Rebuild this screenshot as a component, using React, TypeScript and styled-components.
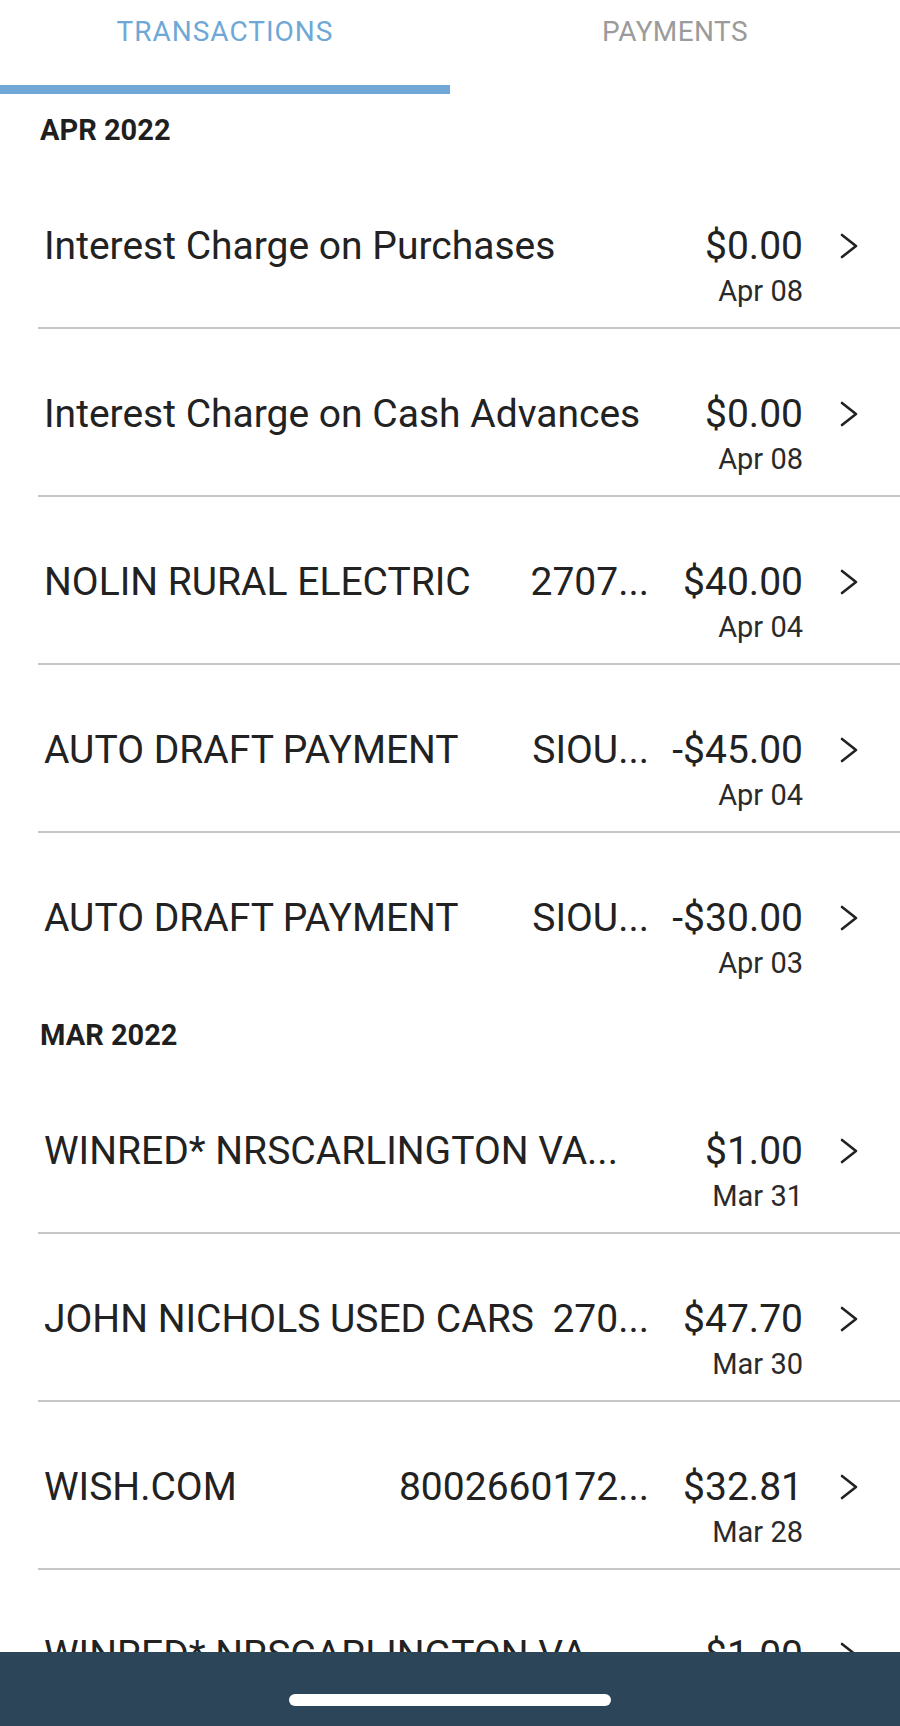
import React from "react";
import styled, { createGlobalStyle } from "styled-components";

const GlobalStyle = createGlobalStyle`
  html, body {
    margin: 0;
    padding: 0;
    background: #ffffff;
  }
  body {
    font-family: Roboto, "Noto Sans", "Liberation Sans", sans-serif;
    color: #222222;
    -webkit-font-smoothing: antialiased;
  }
  * { box-sizing: border-box; }
`;

const Screen = styled.div`
  position: relative;
  width: 900px;
  height: 1726px;
  overflow: hidden;
  background: #ffffff;
`;

const TabBar = styled.nav`
  display: flex;
`;

const Tab = styled.div<{ $active?: boolean }>`
  flex: 1;
  height: 94px;
  padding-top: 15px;
  text-align: center;
  font-size: 28px;
  line-height: 34px;
  letter-spacing: ${(p) => (p.$active ? "1px" : "0.4px")};
  color: ${(p) => (p.$active ? "#6fa8d6" : "#9b9b9b")};
  border-bottom: 9px solid ${(p) => (p.$active ? "#6fa8d6" : "transparent")};
`;

const SectionHeader = styled.h2`
  margin: 0;
  height: 67px;
  padding: 19px 0 0 40px;
  font-size: 29px;
  line-height: 34px;
  font-weight: 700;
  color: #1f1f1f;
`;

const Row = styled.div<{ $divider: boolean }>`
  margin-left: 38px;
  padding: 62px 42px 0 6px;
  height: ${(p) => (p.$divider ? 168 : 166)}px;
  border-bottom: ${(p) => (p.$divider ? "2px solid #c6c6c6" : "none")};
`;

const TopLine = styled.div`
  display: flex;
  align-items: center;
  height: 46px;
  font-size: 39px;
  line-height: 46px;
  color: #222222;
`;

const Name = styled.span`
  flex: 0 0 auto;
  max-width: 600px;
  white-space: nowrap;
  overflow: hidden;
  text-overflow: ellipsis;
`;

const Ref = styled.span`
  flex: 1 1 auto;
  min-width: 0;
  margin: 0 4px 0 16px;
  text-align: right;
  white-space: nowrap;
  overflow: hidden;
`;

const Amount = styled.span`
  flex: none;
  min-width: 150px;
  margin-left: auto;
  text-align: right;
  white-space: nowrap;
`;

const Chevron = styled.svg`
  flex: none;
  width: 18px;
  height: 26px;
  margin-left: 37px;
`;

const DateLine = styled.div`
  margin-top: 5px;
  padding-right: 55px;
  text-align: right;
  font-size: 29px;
  line-height: 34px;
  color: #2a2a2a;
`;

const BottomBar = styled.div`
  position: absolute;
  left: 0;
  right: 0;
  bottom: 0;
  height: 74px;
  background: #2d4559;
  display: flex;
  justify-content: center;
  padding-top: 42px;
`;

const HomeIndicator = styled.div`
  width: 322px;
  height: 12px;
  border-radius: 6px;
  background: #ffffff;
`;

type Txn = { name: string; ref?: string; amount: string; date: string };

const sections: { title: string; items: Txn[] }[] = [
  {
    title: "APR 2022",
    items: [
      { name: "Interest Charge on Purchases", amount: "$0.00", date: "Apr 08" },
      { name: "Interest Charge on Cash Advances", amount: "$0.00", date: "Apr 08" },
      { name: "NOLIN RURAL ELECTRIC", ref: "2707...", amount: "$40.00", date: "Apr 04" },
      { name: "AUTO DRAFT PAYMENT", ref: "SIOU...", amount: "-$45.00", date: "Apr 04" },
      { name: "AUTO DRAFT PAYMENT", ref: "SIOU...", amount: "-$30.00", date: "Apr 03" },
    ],
  },
  {
    title: "MAR 2022",
    items: [
      { name: "WINRED* NRSCARLINGTON VA...", amount: "$1.00", date: "Mar 31" },
      { name: "JOHN NICHOLS USED CARS", ref: "270...", amount: "$47.70", date: "Mar 30" },
      { name: "WISH.COM", ref: "8002660172...", amount: "$32.81", date: "Mar 28" },
      { name: "WINRED* NRSCARLINGTON VA...", amount: "$1.00", date: "Mar 27" },
    ],
  },
];

const ChevronIcon = () => (
  <Chevron viewBox="0 0 18 26" fill="none">
    <polyline
      points="2,2 16,13 2,24"
      stroke="#222222"
      strokeWidth="2.6"
      strokeLinecap="round"
      strokeLinejoin="round"
    />
  </Chevron>
);

export default function App() {
  return (
    <Screen>
      <GlobalStyle />
      <TabBar>
        <Tab $active>TRANSACTIONS</Tab>
        <Tab>PAYMENTS</Tab>
      </TabBar>
      {sections.map((section, si) => (
        <section key={section.title}>
          <SectionHeader>{section.title}</SectionHeader>
          {section.items.map((t, i) => {
            const lastOfSection = i === section.items.length - 1;
            const divider = !(lastOfSection && si < sections.length - 1);
            return (
              <Row key={i} $divider={divider}>
                <TopLine>
                  <Name>{t.name}</Name>
                  {t.ref && <Ref>{t.ref}</Ref>}
                  <Amount>{t.amount}</Amount>
                  <ChevronIcon />
                </TopLine>
                <DateLine>{t.date}</DateLine>
              </Row>
            );
          })}
        </section>
      ))}
      <BottomBar>
        <HomeIndicator />
      </BottomBar>
    </Screen>
  );
}
